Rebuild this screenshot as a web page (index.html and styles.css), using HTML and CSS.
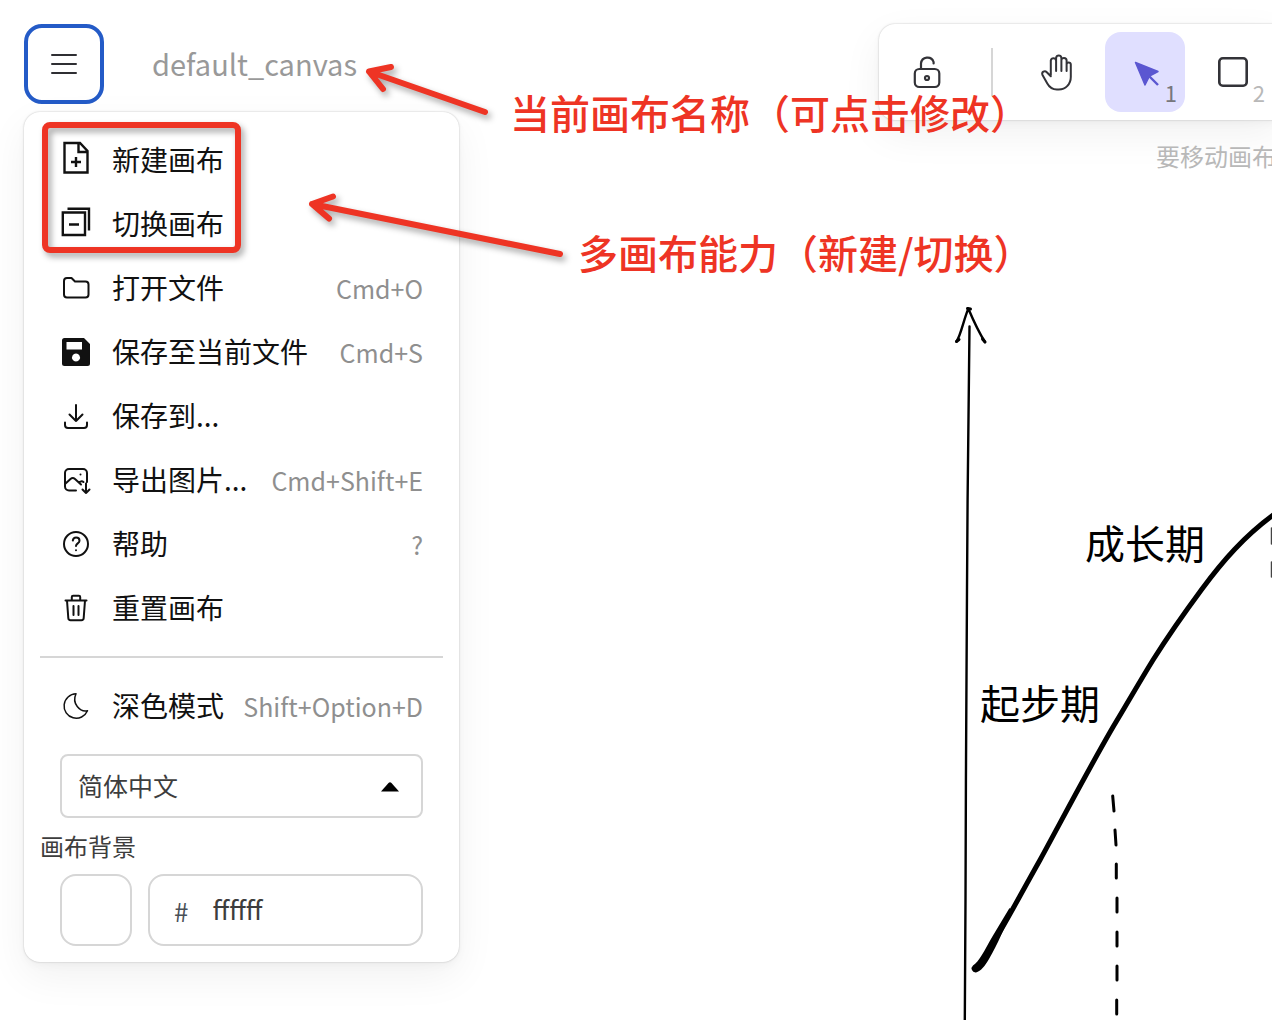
FILE: index.html
```html
<!DOCTYPE html>
<html lang="zh-CN">
<head>
<meta charset="utf-8">
<title>default_canvas</title>
<link rel="stylesheet" href="styles.css">
</head>
<body>
<main class="app">
  <div class="board">
    <svg class="board-drawing" viewBox="0 0 1272 1020" width="1272" height="1020" aria-hidden="true">
      <g fill="none" stroke="#000" stroke-linecap="round" stroke-linejoin="round">
        <path stroke-width="2.4" d="M969.5 326.500C968 440 967.500 500 967 590C966 660 966 800 965.500 900L964.800 1022"/>
        <path stroke-width="2.400" d="M956.500 341.500C961 335 964 318 968.500 308.500M968.500 309C974 322 978 331 985 342"/>
        <path stroke-width="3" d="M956.500 341.500l2.500-2M982.500 339l2.500 3M967.500 308.500l3 .5"/>
        <path stroke-width="5" d="M990 948C1003 928 1018 899 1040 860C1064 816 1088 770 1113 727C1127 704 1137 686 1153 660C1170 633 1185 612 1202 589C1222 562 1244 536 1276 513"/>
        <path fill="#000" stroke="none" d="M973 965.500C979 962 984 951 993 935.500L1009.500 908L1012 911.500C1004 928 998 944 989 959C985 966 981 971 976 972.500A4 4 0 0 1 973 965.500z"/>
        <path stroke-width="3" d="M1112.700 796l1.300 15M1115 830l1 15M1116.300 864v14M1117 898v14M1117 932v14M1117 966v14M1116.700 1000v14"/>
        <path stroke-width="1.500" stroke="#444" d="M1271.500 528v16M1271.500 562v15"/>
      </g>
    </svg>
    <span class="board-text growth">成长期</span>
    <span class="board-text start">起步期</span>
  </div>

  <div class="layout">
    <div class="side">
      <header class="side-head">
        <button class="menu-button" type="button" aria-label="菜单" aria-expanded="true">
          <svg viewBox="0 0 32 32" width="32" height="32"><path d="M4 7h24M4 16h24M4 25h24" fill="none" stroke="#2f2f33" stroke-width="2" stroke-linecap="round"/></svg>
        </button>
        <button class="canvas-name" type="button">default_canvas</button>
      </header>

      <nav class="panel">
        <button class="item" type="button">
          <svg class="icon" viewBox="0 0 32 32"><path d="M4.500-1H20l7.500 8v21.500h-23zM18.500-1v9h9M16 13v10M11 18h10"/></svg>
          <span class="item-label">新建画布</span>
        </button>
        <button class="item" type="button">
          <svg class="icon" viewBox="0 0 32 32"><path d="M2.800 4.500H25V27H2.800zM7.500.800H29V22.500M9 16.500h10"/></svg>
          <span class="item-label">切换画布</span>
        </button>
        <button class="item" type="button">
          <svg class="icon thin" viewBox="0 0 32 32"><path d="M7 6h4.500L15 9.500h10.500a3 3 0 0 1 3 3V22.500a3 3 0 0 1-3 3H7a3 3 0 0 1-3-3V9a3 3 0 0 1 3-3z"/></svg>
          <span class="item-label">打开文件</span>
          <kbd>Cmd+O</kbd>
        </button>
        <button class="item" type="button">
          <svg class="icon solid" viewBox="0 0 32 32"><path fill-rule="evenodd" d="M4.500 2H24l6 6v19.500A2.500 2.500 0 0 1 27.500 30h-23A2.500 2.500 0 0 1 2 27.500v-23A2.500 2.500 0 0 1 4.500 2zM6.500 6v7.500h15.500V6zM16 17.500a4 4 0 1 0 .01 0z"/></svg>
          <span class="item-label">保存至当前文件</span>
          <kbd>Cmd+S</kbd>
        </button>
        <button class="item" type="button">
          <svg class="icon thin" viewBox="0 0 32 32"><path d="M5 22.500V25a3 3 0 0 0 3 3h16a3 3 0 0 0 3-3v-2.500M9.500 14.500L16 21l6.500-6.500M16 21V5"/></svg>
          <span class="item-label">保存到...</span>
        </button>
        <button class="item" type="button">
          <svg class="icon thin" viewBox="0 0 32 32"><path d="M16 26.500H9a4 4 0 0 1-4-4V9a4 4 0 0 1 4-4h14a4 4 0 0 1 4 4v9M20.500 10.500h.01M5 20l5.500-5c1.500-1.300 3-1.300 4.500 0l6 5.500M19 18.500c1.500-1.300 3-1.800 4.500-.5M26 19.500v9.500M22.500 25.500L26 29l3.500-3.500"/></svg>
          <span class="item-label">导出图片...</span>
          <kbd>Cmd+Shift+E</kbd>
        </button>
        <button class="item" type="button">
          <svg class="icon thin" viewBox="0 0 32 32"><circle cx="16" cy="16" r="12"/><path d="M16 22.300v.01M12.800 12.500c.3-2 1.700-3 3.300-3 1.900 0 3.400 1.300 3.400 3.200 0 2.600-3.500 2.800-3.500 5.300"/></svg>
          <span class="item-label">帮助</span>
          <kbd>?</kbd>
        </button>
        <button class="item" type="button">
          <svg class="icon thin" viewBox="0 0 32 32"><path d="M5.500 8.500h21M13.500 14v9M18.500 14v9M7 8.500l1.300 17.500a2.300 2.300 0 0 0 2.300 2.200h10.800a2.300 2.300 0 0 0 2.300-2.200L25 8.500M11.800 8.500V5a1.300 1.300 0 0 1 1.300-1.300h5.800A1.300 1.300 0 0 1 20.200 5v3.500"/></svg>
          <span class="item-label">重置画布</span>
        </button>
        <hr class="divider">
        <button class="item" type="button">
          <svg class="icon hair" viewBox="0 0 32 32"><path d="M16 3.800A12.200 12.200 0 1 0 27.500 20.800C20 22.500 11.500 13.500 16 3.800z"/></svg>
          <span class="item-label">深色模式</span>
          <kbd>Shift+Option+D</kbd>
        </button>
        <div class="language">
          <select class="language-select" aria-label="语言">
            <option>简体中文</option>
          </select>
          <svg class="caret" viewBox="0 0 18 10" width="18" height="10" aria-hidden="true"><path d="M0 9.500L7.500 1q1.500-1.500 3 0L18 9.500z"/></svg>
        </div>
        <label class="section-label" for="background">画布背景</label>
        <div class="color-row">
          <button class="swatch" type="button" aria-label="ffffff"></button>
          <div class="hex">
            <span class="hash">#</span>
            <input class="hex-input" id="background" type="text" value="ffffff">
          </div>
        </div>
      </nav>
    </div>

    <div class="tools">
      <div class="toolbar" role="toolbar">
        <button class="tool" type="button" aria-label="锁定">
          <svg viewBox="0 0 40 40" width="40" height="40"><g fill="none" stroke="#333338" stroke-width="2.200" stroke-linecap="round"><rect x="7.800" y="17" width="24.500" height="18" rx="4.500"/><path d="M14 17v-5.500a6.500 6.500 0 0 1 12.600-1.500v1.500"/><circle cx="20" cy="26" r="2"/></g></svg>
        </button>
        <span class="tool-divider"></span>
        <button class="tool" type="button" aria-label="抓手">
          <svg viewBox="0 0 40 40" width="40" height="40"><path fill="none" stroke="#333338" stroke-width="2" stroke-linecap="round" stroke-linejoin="round" d="M13.800 23V8.500a2.700 2.700 0 0 1 5.300 0V19M19.100 8V5.800a2.700 2.700 0 0 1 5.300 0V19M24.400 8.500a2.600 2.600 0 0 1 5.200 0v10.500M29.600 12.500a2.100 2.100 0 0 1 4.200 0V25c0 7-5 12.500-12 12.500h-2c-4 0-7-1.500-9.500-6L5.500 23c-1.300-3 2.200-4.800 4.300-2.800l4 4"/></svg>
        </button>
        <button class="tool active" type="button" aria-label="选择" aria-pressed="true">
          <svg viewBox="0 0 40 40" width="40" height="40"><path fill="#5b57d1" stroke="#5b57d1" stroke-width="1.500" stroke-linejoin="round" d="M10.500 10.500L33 19.500L24.500 24L20 33z"/><path stroke="#5b57d1" stroke-width="2.400" d="M23.500 23.500L33 33"/></svg>
          <span class="tool-key">1</span>
        </button>
        <button class="tool" type="button" aria-label="矩形">
          <svg viewBox="0 0 40 40" width="40" height="40"><rect x="6.300" y="6.300" width="27.400" height="27.400" rx="3.500" fill="none" stroke="#333338" stroke-width="2.600"/></svg>
          <span class="tool-key">2</span>
        </button>
      </div>
      <p class="hint">要移动画布</p>
    </div>
  </div>

  <div class="notes">
    <svg class="note-arrows" viewBox="0 0 640 300" width="640" height="300" aria-hidden="true">
      <g fill="none" stroke="#ee3424" stroke-width="6" stroke-linecap="round" stroke-linejoin="round">
        <rect x="45" y="125" width="193" height="125" rx="5"/>
        <path d="M485 112L369 71.500M391 67L369 71.500L383 89"/>
        <path d="M560 254L312 204M333 196.500L312 204L329 218.500"/>
      </g>
    </svg>
    <span class="note note-name">当前画布名称（可点击修改）</span>
    <span class="note note-multi">多画布能力（新建/切换）</span>
  </div>
</main>
</body>
</html>
```

FILE: styles.css
```css
* {
  box-sizing: border-box;
}

body {
  margin: 0;
  background: #fff;
  color: #1b1b1f;
  font-family: "Noto Sans CJK SC", "Noto Sans", sans-serif;
}

button,
input,
select {
  font: inherit;
  color: inherit;
}

button {
  padding: 0;
  border: 0;
  background: none;
  cursor: pointer;
}

.app {
  position: relative;
  min-height: 100vh;
  overflow: hidden;
}

/* Drawing surface */
.board,
.notes {
  position: absolute;
  inset: 0;
}

.notes {
  pointer-events: none;
}

.board-drawing,
.note-arrows {
  display: block;
}

.board-text {
  position: absolute;
  color: #000;
  font-size: 40px;
  line-height: 48px;
  white-space: nowrap;
}

.growth {
  left: 1085px;
  top: 518px;
}

.start {
  left: 980px;
  top: 678px;
}

.layout {
  position: relative;
  display: flex;
  justify-content: space-between;
  align-items: flex-start;
  padding: 24px 0 24px 24px;
}

/* Left column */
.side {
  display: flex;
  flex-direction: column;
  gap: 8px;
  min-width: 435px;
}

.side-head {
  display: flex;
  align-items: center;
  gap: 48px;
}

.menu-button {
  display: grid;
  place-items: center;
  width: 80px;
  height: 80px;
  border: 4px solid #245bc7;
  border-radius: 18px;
  background: #fff;
}

.canvas-name {
  padding-bottom: 2px;
  color: #999;
  font-size: 29px;
  line-height: 40px;
}

.panel {
  padding: 16px;
  border-radius: 16px;
  background: #fff;
  box-shadow: 0 0 2px rgba(0, 0, 0, 0.25), 0 4px 8px rgba(0, 0, 0, 0.03),
    0 14px 40px rgba(0, 0, 0, 0.06);
}

.item {
  display: flex;
  align-items: center;
  width: 100%;
  height: 64px;
  padding: 0 20px;
  text-align: left;
}

.icon {
  flex: none;
  width: 32px;
  height: 32px;
  margin-right: 20px;
  overflow: visible;
  fill: none;
  stroke: #111;
  stroke-width: 2.4px;
}

.thin {
  stroke-width: 2px;
  stroke-linecap: round;
  stroke-linejoin: round;
}

.hair {
  stroke-width: 1.5px;
  stroke-linejoin: round;
}

.solid {
  fill: #111;
  stroke: none;
}

.item-label {
  padding-bottom: 2px;
  font-size: 28px;
  line-height: 40px;
  color: #111;
  white-space: nowrap;
}

.item kbd {
  margin-left: auto;
  color: #8f8f8f;
  font-family: inherit;
  font-size: 25px;
  line-height: 40px;
  white-space: nowrap;
}

.divider {
  height: 2px;
  margin: 16px 0;
  border: 0;
  background: #d6d6d6;
}

.language {
  position: relative;
  margin: 16px 20px 12px;
}

.language-select {
  display: block;
  width: 100%;
  height: 64px;
  padding: 0 16px 2px;
  border: 2px solid #d6d6d6;
  border-radius: 8px;
  background: #fff;
  color: #3d3d3d;
  font-size: 25px;
  appearance: none;
}

.caret {
  position: absolute;
  right: 24px;
  top: 28px;
}

.section-label {
  display: block;
  margin-bottom: 12px;
  color: #3d3d3d;
  font-size: 24px;
  line-height: 32px;
}

.color-row {
  display: flex;
  gap: 16px;
  padding: 0 20px;
}

.swatch {
  flex: none;
  width: 72px;
  height: 72px;
  border: 2px solid #d6d6d6;
  border-radius: 16px;
  background: #fff;
}

.hex {
  display: flex;
  flex: 1;
  align-items: center;
  gap: 24px;
  min-width: 0;
  height: 72px;
  padding: 0 24px;
  border: 2px solid #d6d6d6;
  border-radius: 16px;
}

.hash {
  color: #495057;
  font-size: 26px;
}

.hex-input {
  flex: 1;
  width: 0;
  min-width: 0;
  padding: 0 0 4px;
  border: 0;
  outline: 0;
  background: none;
  color: #3d3d3d;
  font-size: 26px;
}

/* Tools */
.tools {
  display: flex;
  flex-direction: column;
  align-items: flex-end;
  gap: 20px;
  margin-right: -9px;
}

.toolbar {
  display: flex;
  gap: 8px;
  padding: 8px;
  border-radius: 16px 0 0 16px;
  background: #fff;
  box-shadow: 0 0 2px rgba(0, 0, 0, 0.25), 0 4px 8px rgba(0, 0, 0, 0.03),
    0 14px 40px rgba(0, 0, 0, 0.06);
}

.tool {
  position: relative;
  display: grid;
  place-items: center;
  width: 80px;
  height: 80px;
  border-radius: 16px;
}

.active {
  background: #e0dfff;
}

.tool-key {
  position: absolute;
  right: 8px;
  bottom: 8px;
  color: #b8b8b8;
  font-size: 22px;
  line-height: 24px;
}

.active .tool-key {
  color: #77777c;
}

.tool-divider {
  align-self: center;
  width: 2px;
  height: 48px;
  margin: 0 16px;
  background: #d6d6d6;
}

.hint {
  margin: 0;
  padding-right: 5px;
  color: #b8b8b8;
  font-size: 24px;
  line-height: 32px;
  white-space: nowrap;
}

/* Red callouts over the page */
.note-arrows {
  filter: drop-shadow(3px 4px 3px rgba(0, 0, 0, 0.35));
}

.note {
  position: absolute;
  color: #ee3424;
  font-size: 40px;
  font-weight: 500;
  line-height: 48px;
  white-space: nowrap;
}

.note-name {
  left: 510px;
  top: 88px;
}

.note-multi {
  left: 578px;
  top: 228px;
}
```
